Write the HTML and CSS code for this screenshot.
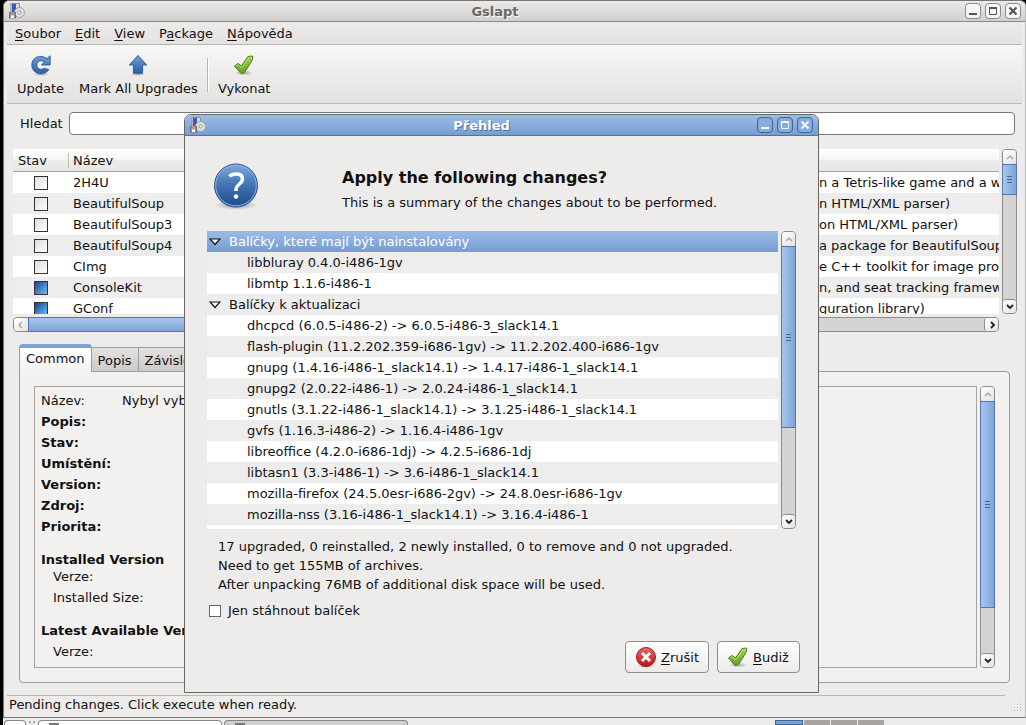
FILE: index.html
```html
<!DOCTYPE html>
<html lang="cs">
<head>
  <meta charset="UTF-8" />
  <meta name="viewport" content="width=device-width, initial-scale=1.0" />
  <title>Gslapt</title>
  <link rel="stylesheet" href="styles.css">
</head>
<body>
  <svg class="defs" aria-hidden="true">
    <defs>
      <linearGradient id="blue" x1="0" y1="0" x2="0" y2="1">
        <stop offset="0" stop-color="#6f9fd8" />
        <stop offset="1" stop-color="#2a60a8" />
      </linearGradient>
      <linearGradient id="ball" x1="0" y1="0" x2="0" y2="1">
        <stop offset="0" stop-color="#7fabd9" />
        <stop offset="0.5" stop-color="#3f72b4" />
        <stop offset="1" stop-color="#1f4a8c" />
      </linearGradient>
      <linearGradient id="green" x1="0" y1="0" x2="0" y2="1">
        <stop offset="0" stop-color="#a5d455" />
        <stop offset="1" stop-color="#669e25" />
      </linearGradient>
      <linearGradient id="red" x1="0" y1="0" x2="0" y2="1">
        <stop offset="0" stop-color="#ea6a6a" />
        <stop offset="1" stop-color="#b8141c" />
      </linearGradient>
      <radialGradient id="shade">
        <stop offset="0" stop-color="#000" stop-opacity="0.35" />
        <stop offset="1" stop-color="#000" stop-opacity="0" />
      </radialGradient>
    </defs>
    <symbol id="app" viewBox="0 0 16 16">
      <path d="M2 .5h8.500v11H2z" fill="#dcdcdc" stroke="#8f8f8f" />
      <path d="M3 1h4v9H3z" fill="#3a5cb4" />
      <circle cx="10.500" cy="9.500" r="5" fill="#dedede" stroke="#a2a2a2" />
      <circle cx="10.500" cy="9.500" r="1.500" fill="#fff" stroke="#8f8f8f" />
      <path d="M.5 9.500h6v5.500h-6z" fill="#9a9da6" stroke="#6d6f78" />
      <path d="M2 9h3v2H2z" fill="#d88" />
      <path d="M2 12.500h3V15H2z" fill="#fff" />
    </symbol>
    <symbol id="check" viewBox="0 0 22 22">
      <ellipse cx="11" cy="19" rx="9" ry="2.500" fill="url(#shade)" />
      <path d="M1.500 12l3.500-2.500 3.500 2.500L15 2.500l4.500-.5c.5 1.500.3 3-.5 4.500L11.500 18.500 8 19.500z" fill="url(#green)" stroke="#4c7d1c" stroke-linejoin="round" />
      <path d="M3 12l2-1.300 4 3L16 3.500l2.500-.3" fill="none" stroke="#c5e88c" stroke-width=".8" />
    </symbol>
    <symbol id="up" viewBox="0 0 8 8"><path d="M1 6l3-3 3 3" fill="none" stroke="#aaa" stroke-width="1.500" /></symbol>
    <symbol id="down" viewBox="0 0 8 8"><path d="M1 2l3 3 3-3" fill="none" stroke="#222" stroke-width="1.800" /></symbol>
    <symbol id="left" viewBox="0 0 8 8"><path d="M5 1L2 4l3 3" fill="none" stroke="#aaa" stroke-width="1.500" /></symbol>
    <symbol id="right" viewBox="0 0 8 8"><path d="M3 1l3 3-3 3" fill="none" stroke="#222" stroke-width="1.800" /></symbol>
    <symbol id="min" viewBox="0 0 10 10"><path d="M1 8h8" stroke="currentColor" stroke-width="2" /></symbol>
    <symbol id="max" viewBox="0 0 10 10"><path d="M1.500 2h7v6.500h-7z" fill="none" stroke="currentColor" /><path d="M1 2h8" stroke="currentColor" stroke-width="2" /></symbol>
    <symbol id="close" viewBox="0 0 10 10"><path d="M1.500 1.500l7 7m0-7l-7 7" stroke="currentColor" stroke-width="2.200" /></symbol>
    <symbol id="expander" viewBox="0 0 12 8"><path d="M1 1h10L6 6.500z" fill="#fff" stroke="#111" stroke-width="1.200" /></symbol>
  </svg>

  <main class="window">
    <header class="titlebar">
      <svg class="app-icon"><use href="#app" /></svg>
      <h1 class="title">Gslapt</h1>
      <div class="controls">
        <button class="control" aria-label="Minimalizovat"><svg><use href="#min" /></svg></button>
        <button class="control" aria-label="Maximalizovat"><svg><use href="#max" /></svg></button>
        <button class="control" aria-label="Zavřít"><svg><use href="#close" /></svg></button>
      </div>
    </header>
    <nav class="menubar">
      <button class="menu"><u>S</u>oubor</button>
      <button class="menu"><u>E</u>dit</button>
      <button class="menu"><u>V</u>iew</button>
      <button class="menu">P<u>a</u>ckage</button>
      <button class="menu"><u>N</u>ápověda</button>
    </nav>
    <div class="toolbar">
      <button class="tool">
        <svg viewBox="0 0 24 24">
          <ellipse cx="12" cy="22" rx="9" ry="2" fill="url(#shade)" />
          <path d="M22 2v10h-9.500l3.200-3.200C12.500 5.800 7.500 8 7.500 12c0 4.500 5 6 8 3.500l5 1.500c-4 7-18.500 6-18.500-5C2 3 12 0 18.500 5z" fill="url(#blue)" stroke="#2a5a9c" stroke-linejoin="round" />
        </svg>
        Update
      </button>
      <button class="tool">
        <svg viewBox="0 0 24 24">
          <ellipse cx="12" cy="22" rx="8" ry="2" fill="url(#shade)" />
          <path d="M12 1.500l9.500 10.500h-4.500v9h-10v-9H2.500z" fill="url(#blue)" stroke="#2a5a9c" stroke-linejoin="round" />
        </svg>
        Mark All Upgrades
      </button>
      <span class="divider"></span>
      <button class="tool"><svg><use href="#check" /></svg>Vykonat</button>
    </div>

    <div class="search">
      <label for="hledat">Hledat</label>
      <input type="text" id="hledat" />
    </div>

    <div class="packages">
      <div class="package-list">
        <table>
          <thead>
            <tr><th class="col-state">Stav</th><th class="col-name">Název</th><th></th></tr>
          </thead>
          <tbody>
            <tr><td><input type="checkbox" aria-label="2H4U" /></td><td>2H4U</td><td>n a Tetris-like game and a wa</td></tr>
            <tr><td><input type="checkbox" aria-label="BeautifulSoup" /></td><td>BeautifulSoup</td><td>n HTML/XML parser)</td></tr>
            <tr><td><input type="checkbox" aria-label="BeautifulSoup3" /></td><td>BeautifulSoup3</td><td>on HTML/XML parser)</td></tr>
            <tr><td><input type="checkbox" aria-label="BeautifulSoup4" /></td><td>BeautifulSoup4</td><td>a package for BeautifulSoup)</td></tr>
            <tr><td><input type="checkbox" aria-label="CImg" /></td><td>CImg</td><td>e C++ toolkit for image proc</td></tr>
            <tr><td><input type="checkbox" aria-label="ConsoleKit" checked /></td><td>ConsoleKit</td><td>n, and seat tracking framewo</td></tr>
            <tr><td><input type="checkbox" aria-label="GConf" checked /></td><td>GConf</td><td>guration library)</td></tr>
          </tbody>
        </table>
      </div>
      <div class="scroll">
        <button aria-label="Nahoru"><svg><use href="#up" /></svg></button>
        <span class="thumb thumb-list"></span>
        <button aria-label="Dolů"><svg><use href="#down" /></svg></button>
      </div>
      <div class="scroll horizontal">
        <button aria-label="Vlevo"><svg><use href="#left" /></svg></button>
        <span class="thumb thumb-wide"></span>
        <button aria-label="Vpravo"><svg><use href="#right" /></svg></button>
      </div>
    </div>

    <div class="tabs">
      <button class="tab active">Common</button>
      <button class="tab">Popis</button>
      <button class="tab">Závislosti</button>
    </div>
    <section class="page">
      <div class="details">
        <dl>
          <div class="light"><dt>Název:</dt><dd>Nybyl vybrán</dd></div>
          <div><dt>Popis:</dt></div>
          <div><dt>Stav:</dt></div>
          <div><dt>Umístění:</dt></div>
          <div><dt>Version:</dt></div>
          <div><dt>Zdroj:</dt></div>
          <div><dt>Priorita:</dt></div>
        </dl>
        <h2>Installed Version</h2>
        <p class="tight">Verze:</p>
        <p>Installed Size:</p>
        <h2>Latest Available Version</h2>
        <p>Verze:</p>
        <p>Velikost:</p>
      </div>
      <div class="scroll">
        <button aria-label="Nahoru"><svg><use href="#up" /></svg></button>
        <span class="thumb thumb-details"></span>
        <button aria-label="Dolů"><svg><use href="#down" /></svg></button>
      </div>
    </section>
    <footer class="status">
      <span>Pending changes. Click execute when ready.</span>
      <span class="grip"></span>
    </footer>
  </main>

  <div class="taskbar">
    <span class="task show-desktop"></span>
    <span class="handle"></span>
    <span class="task task-active"><i></i></span>
    <span class="task task-idle"><i></i></span>
    <div class="pager"><span class="current"></span><span></span><span></span><span></span></div>
  </div>

  <section class="dialog" role="dialog" aria-labelledby="dialog-title">
    <header class="titlebar">
      <svg class="app-icon"><use href="#app" /></svg>
      <h2 class="title" id="dialog-title">Přehled</h2>
      <div class="controls">
        <button class="control" aria-label="Minimalizovat"><svg><use href="#min" /></svg></button>
        <button class="control" aria-label="Maximalizovat"><svg><use href="#max" /></svg></button>
        <button class="control" aria-label="Zavřít"><svg><use href="#close" /></svg></button>
      </div>
    </header>
    <div class="message">
      <svg class="question" viewBox="0 0 48 48">
        <ellipse cx="24" cy="43" rx="22" ry="5" fill="url(#shade)" />
        <circle cx="24" cy="23.500" r="21.500" fill="url(#ball)" stroke="#2a5594" />
        <circle cx="24" cy="23.500" r="20.300" fill="none" stroke="#8fb3dd" stroke-width="1" />
        <path d="M17.500 14.500C20 11.500 30.500 10 30.500 17c0 5-6.500 5.500-6.500 10.500V29" fill="none" stroke="#fff" stroke-width="3.500" />
        <circle cx="24" cy="34.500" r="2.300" fill="#fff" />
      </svg>
      <div>
        <h3>Apply the following changes?</h3>
        <p>This is a summary of the changes about to be performed.</p>
      </div>
    </div>
    <div class="summary">
      <ul class="tree">
        <li class="group selected"><svg><use href="#expander" /></svg>Balíčky, které mají být nainstalovány</li>
        <li>libbluray 0.4.0-i486-1gv</li>
        <li>libmtp 1.1.6-i486-1</li>
        <li class="group"><svg><use href="#expander" /></svg>Balíčky k aktualizaci</li>
        <li>dhcpcd (6.0.5-i486-2) -&gt; 6.0.5-i486-3_slack14.1</li>
        <li>flash-plugin (11.2.202.359-i686-1gv) -&gt; 11.2.202.400-i686-1gv</li>
        <li>gnupg (1.4.16-i486-1_slack14.1) -&gt; 1.4.17-i486-1_slack14.1</li>
        <li>gnupg2 (2.0.22-i486-1) -&gt; 2.0.24-i486-1_slack14.1</li>
        <li>gnutls (3.1.22-i486-1_slack14.1) -&gt; 3.1.25-i486-1_slack14.1</li>
        <li>gvfs (1.16.3-i486-2) -&gt; 1.16.4-i486-1gv</li>
        <li>libreoffice (4.2.0-i686-1dj) -&gt; 4.2.5-i686-1dj</li>
        <li>libtasn1 (3.3-i486-1) -&gt; 3.6-i486-1_slack14.1</li>
        <li>mozilla-firefox (24.5.0esr-i686-2gv) -&gt; 24.8.0esr-i686-1gv</li>
        <li>mozilla-nss (3.16-i486-1_slack14.1) -&gt; 3.16.4-i486-1</li>
        <li></li>
      </ul>
      <div class="scroll">
        <button aria-label="Nahoru"><svg><use href="#up" /></svg></button>
        <span class="thumb thumb-tree"></span>
        <button aria-label="Dolů"><svg><use href="#down" /></svg></button>
      </div>
    </div>
    <div class="totals">
      <p>17 upgraded, 0 reinstalled, 2 newly installed, 0 to remove and 0 not upgraded.</p>
      <p>Need to get 155MB of archives.</p>
      <p>After unpacking 76MB of additional disk space will be used.</p>
    </div>
    <div class="download-only">
      <input type="checkbox" id="jen-stahnout" />
      <label for="jen-stahnout">Jen stáhnout balíček</label>
    </div>
    <div class="actions">
      <button class="action">
        <svg viewBox="0 0 22 22">
          <ellipse cx="11" cy="20" rx="9" ry="2" fill="url(#shade)" />
          <circle cx="11" cy="11" r="9.500" fill="url(#red)" stroke="#a5151c" />
          <path d="M7 7l8 8m0-8l-8 8" stroke="#fff" stroke-width="3" />
        </svg>
        <span><u>Z</u>rušit</span>
      </button>
      <button class="action">
        <svg><use href="#check" /></svg>
        <span><u>B</u>udiž</span>
      </button>
    </div>
  </section>
</body>
</html>
```

FILE: styles.css
```css
* {
  box-sizing: border-box;
}
body {
  margin: 0;
  height: 100vh;
  overflow: hidden;
  display: flex;
  flex-direction: column;
  background: #000;
  color: #111;
  font-family: "DejaVu Sans", sans-serif;
  font-size: 13px;
  line-height: 21px;
}
button {
  font: inherit;
  color: inherit;
  padding: 0;
  border: none;
  background: none;
}
h1, h2, h3, p, dl, dd, ul {
  margin: 0;
  padding: 0;
  font-size: 13px;
}
u {
  text-underline-offset: 2px;
}
svg {
  display: block;
  flex: none;
}
.defs {
  position: absolute;
  width: 0;
  height: 0;
}

/* windows */
.window {
  flex: 1;
  min-height: 0;
  margin-left: 3px;
  display: flex;
  flex-direction: column;
  background: #edeceb;
  border: 1px solid #777;
  border-right-color: #bbb;
  border-radius: 6px 6px 0 0;
}
.dialog {
  position: absolute;
  left: 184px;
  top: 114px;
  width: 635px;
  background: #edeceb;
  border: 1px solid #666;
  border-radius: 7px 7px 0 0;
}
.titlebar {
  height: 21px;
  flex: none;
  display: flex;
  align-items: center;
  padding: 0 4px 0 5px;
  border-bottom: 1px solid #8c8b8a;
  border-radius: 6px 6px 0 0;
  background: linear-gradient(#ecebea, #d0cfce);
}
.title {
  flex: 1;
  text-align: center;
  color: #686868;
  text-shadow: 1px 1px #f5f5f5;
}
.app-icon {
  width: 16px;
  height: 16px;
}
.controls {
  display: flex;
  gap: 4px;
}
.control {
  width: 16px;
  height: 16px;
  display: flex;
  align-items: center;
  justify-content: center;
  border: 1px solid #8a8a8a;
  border-radius: 4px;
  background: #f6f6f5;
  color: #555;
}
.control svg {
  width: 10px;
  height: 10px;
}
.dialog .titlebar {
  height: 21px;
  padding: 0 5px;
  border-color: #4a74ad;
  background: linear-gradient(#9dbde8, #769dd0);
}
.dialog .title {
  color: #fff;
  text-shadow: 1px 1px #4a70a5;
}
.dialog .control {
  border-color: #3c659e;
  background: #86abdc;
  color: #f0f5fc;
}

/* menu and toolbar */
.menubar {
  display: flex;
  gap: 14px;
  height: 23px;
  flex: none;
  margin: 0 3px;
  padding: 0 8px;
  border-bottom: 1px solid #b5b4b3;
  background: linear-gradient(#ecebea, #e4e3e2);
}
.toolbar {
  display: flex;
  height: 59px;
  flex: none;
  margin: 0 3px;
  padding: 9px 10px 7px;
  gap: 15px;
  border-bottom: 1px solid #bdbcbb;
  background: linear-gradient(#f7f7f6, #e3e2e1);
}
.tool {
  display: flex;
  flex-direction: column;
  align-items: center;
  gap: 2px;
}
.tool svg {
  width: 22px;
  height: 22px;
}
.divider {
  width: 2px;
  height: 34px;
  margin: 4px -6px 0;
  border-left: 1px solid #b5b4b3;
  border-right: 1px solid #fff;
}

/* search and package list */
.search {
  display: flex;
  align-items: center;
  gap: 6px;
  padding: 8px 10px 14px 16px;
}
.search input {
  flex: 1;
  height: 23px;
  border: 1px solid #777;
  border-radius: 4px;
  background: #fff;
}
.packages {
  display: grid;
  grid-template-columns: 1fr 15px;
  gap: 3px;
  padding: 0 8px 0 9px;
}
.package-list {
  height: 165px;
  overflow: hidden;
  background: #fff;
}
table {
  width: 100%;
  table-layout: fixed;
  border-spacing: 0;
}
th {
  height: 23px;
  padding: 0 5px;
  text-align: left;
  font-weight: normal;
  border-bottom: 1px solid #a5a4a3;
  background: linear-gradient(#fff, #f5f5f4 50%, #ececeb 50%, #e8e7e6);
}
.col-state {
  width: 55px;
}
.col-name {
  width: 751px;
  background: linear-gradient(#bbb, #bbb) 0 4px / 1px 15px no-repeat, linear-gradient(#fff, #f5f5f4 50%, #ececeb 50%, #e8e7e6);
}
td {
  height: 21px;
  padding: 0 0 0 5px;
  line-height: 20px;
  overflow: hidden;
  white-space: nowrap;
}
td:first-child {
  padding: 0;
}
td:last-child {
  padding: 0;
}
tbody tr:nth-child(even) {
  background: #ededed;
}
td input {
  display: block;
  appearance: none;
  width: 14px;
  height: 14px;
  margin: 0 auto;
  border: 1px solid #333;
  background: linear-gradient(135deg, #ddd, #fff);
}
td input:checked {
  background: linear-gradient(135deg, #1f3f94, #62c3ee);
}

/* scrollbars */
.scroll {
  width: 15px;
  display: flex;
  flex-direction: column;
  border: 1px solid #8d8c8b;
  border-radius: 4px;
  background: #d5d4d2;
}
.scroll button {
  width: 13px;
  height: 14px;
  flex: none;
  display: flex;
  align-items: center;
  justify-content: center;
  background: linear-gradient(135deg, #fff, #e4e3e2);
  border-radius: 3px;
}
.scroll button svg {
  width: 8px;
  height: 8px;
}
.scroll button:last-child {
  margin-top: auto;
  border-top: 1px solid #8d8c8b;
}
.thumb {
  margin: 0 -1px;
  border: 1px solid #5078b0;
  background:
    repeating-linear-gradient(#3f689f 0 1px, transparent 1px 3px) center / 5px 7px no-repeat,
    linear-gradient(90deg, #a8c5ec, #7ea5d8);
}
.thumb-list {
  height: 31px;
}
.thumb-tree {
  height: 182px;
}
.thumb-details {
  height: 207px;
}
.horizontal {
  width: auto;
  height: 15px;
  flex-direction: row;
}
.horizontal button {
  width: 14px;
  height: 13px;
}
.horizontal button:last-child {
  margin: 0 0 0 auto;
  border-top: none;
  border-left: 1px solid #8d8c8b;
}
.thumb-wide {
  width: 600px;
  margin: -1px 0;
  background: linear-gradient(#a8c5ec, #7ea5d8);
}

/* notebook */
.tabs {
  display: flex;
  align-items: flex-end;
  padding: 12px 15px 0;
}
.tab {
  height: 24px;
  padding: 2px 6px 0;
  border: 1px solid #9d9c9b;
  border-left: none;
  border-bottom: none;
  background: linear-gradient(#e3e2e1, #cccbc9);
}
.tab.active {
  height: 28px;
  margin-bottom: -1px;
  padding: 0 6px 3px;
  position: relative;
  border-left: 1px solid #9d9c9b;
  border-top: 4px solid #7da4d8;
  border-radius: 4px 4px 0 0;
  background: linear-gradient(#fff, #f2f1f0);
}
.page {
  flex: 1;
  min-height: 0;
  display: flex;
  gap: 3px;
  margin: 0 15px 12px;
  padding: 14px;
  border: 1px solid #9d9c9b;
  border-radius: 0 4px 4px 4px;
  background: #f2f1f0;
}
.details {
  flex: 1;
  overflow: hidden;
  padding: 3px 6px;
  border: 1px solid #a5a4a3;
}
dl div {
  display: flex;
  font-weight: bold;
}
dl .light {
  font-weight: normal;
}
dt {
  width: 81px;
}
.details h2 {
  padding-top: 13px;
  line-height: 20px;
}
.details p {
  padding-left: 12px;
}
.details .tight {
  padding-bottom: 4px;
  line-height: 13px;
}
.status {
  height: 22px;
  flex: none;
  display: flex;
  justify-content: space-between;
  margin: 0 3px;
  padding-left: 2px;
  line-height: 20px;
  background: linear-gradient(#b9b8b7, #b9b8b7) 0 0 / calc(100% - 17px) 1px no-repeat;
}
.grip {
  width: 12px;
  height: 12px;
  align-self: center;
  background: radial-gradient(#aaa 1px, transparent 1px) 0 0 / 3px 3px;
  clip-path: polygon(100% 0, 100% 100%, 0 100%);
}

/* taskbar */
.taskbar {
  height: 7px;
  flex: none;
  display: flex;
  gap: 2px;
  margin-left: 3px;
  padding: 2px 0 0 1px;
  background: #eeeceb;
}
.task {
  border: 1px solid #888;
  border-bottom: none;
  border-radius: 4px 4px 0 0;
  background: #fff;
}
.task i {
  display: block;
  width: 10px;
  height: 2px;
  margin: 2px 0 0 10px;
  background: #777;
}
.show-desktop {
  width: 22px;
}
.handle {
  width: 8px;
  background: radial-gradient(#aaa 1px, transparent 1px) 0 0 / 4px 4px;
}
.task-active {
  width: 184px;
}
.task-idle {
  width: 184px;
  background: #d2d0ce;
}
.pager {
  display: flex;
  gap: 1px;
  width: 109px;
  margin: 0 142px 0 auto;
}
.pager span {
  flex: 1;
  background: #a8a4a2;
}
.pager .current {
  background: #75a3d9;
  border: 1px solid #3f6597;
}

/* dialog content */
.message {
  display: flex;
  gap: 82px;
  padding: 26px 27px 16px;
}
.question {
  width: 48px;
  height: 48px;
}
.message h3 {
  padding-top: 4px;
  font-size: 16px;
  line-height: 24px;
}
.message p {
  padding-top: 1px;
  line-height: 24px;
}
.summary {
  display: flex;
  gap: 3px;
  padding: 0 22px;
}
.tree {
  flex: 1;
  height: 298px;
  overflow: hidden;
  list-style: none;
}
.tree li {
  height: 21px;
  padding-left: 40px;
  white-space: nowrap;
  background: #fff;
}
.tree li:nth-child(even) {
  background: #ededed;
}
.tree .group {
  display: flex;
  align-items: center;
  gap: 8px;
  padding-left: 2px;
}
.tree .group svg {
  width: 12px;
  height: 8px;
}
.tree .selected {
  color: #fff;
  background: linear-gradient(#9cbbe6, #769dd1);
}
.totals {
  padding: 8px 33px 6px;
  line-height: 19px;
}
.download-only {
  display: flex;
  align-items: center;
  gap: 7px;
  padding: 0 24px;
}
.download-only input {
  appearance: none;
  width: 12px;
  height: 12px;
  margin: 0;
  border: 1px solid #666;
  background: #fff;
}
.actions {
  display: flex;
  justify-content: flex-end;
  gap: 8px;
  padding: 20px 18px 19px;
}
.action {
  height: 32px;
  display: flex;
  align-items: center;
  gap: 4px;
  min-width: 83px;
  padding: 0 9px;
  border: 1px solid #8f8e8d;
  border-radius: 4px;
  background: linear-gradient(#fff, #ecebea);
}
.action svg {
  width: 22px;
  height: 22px;
}
```
